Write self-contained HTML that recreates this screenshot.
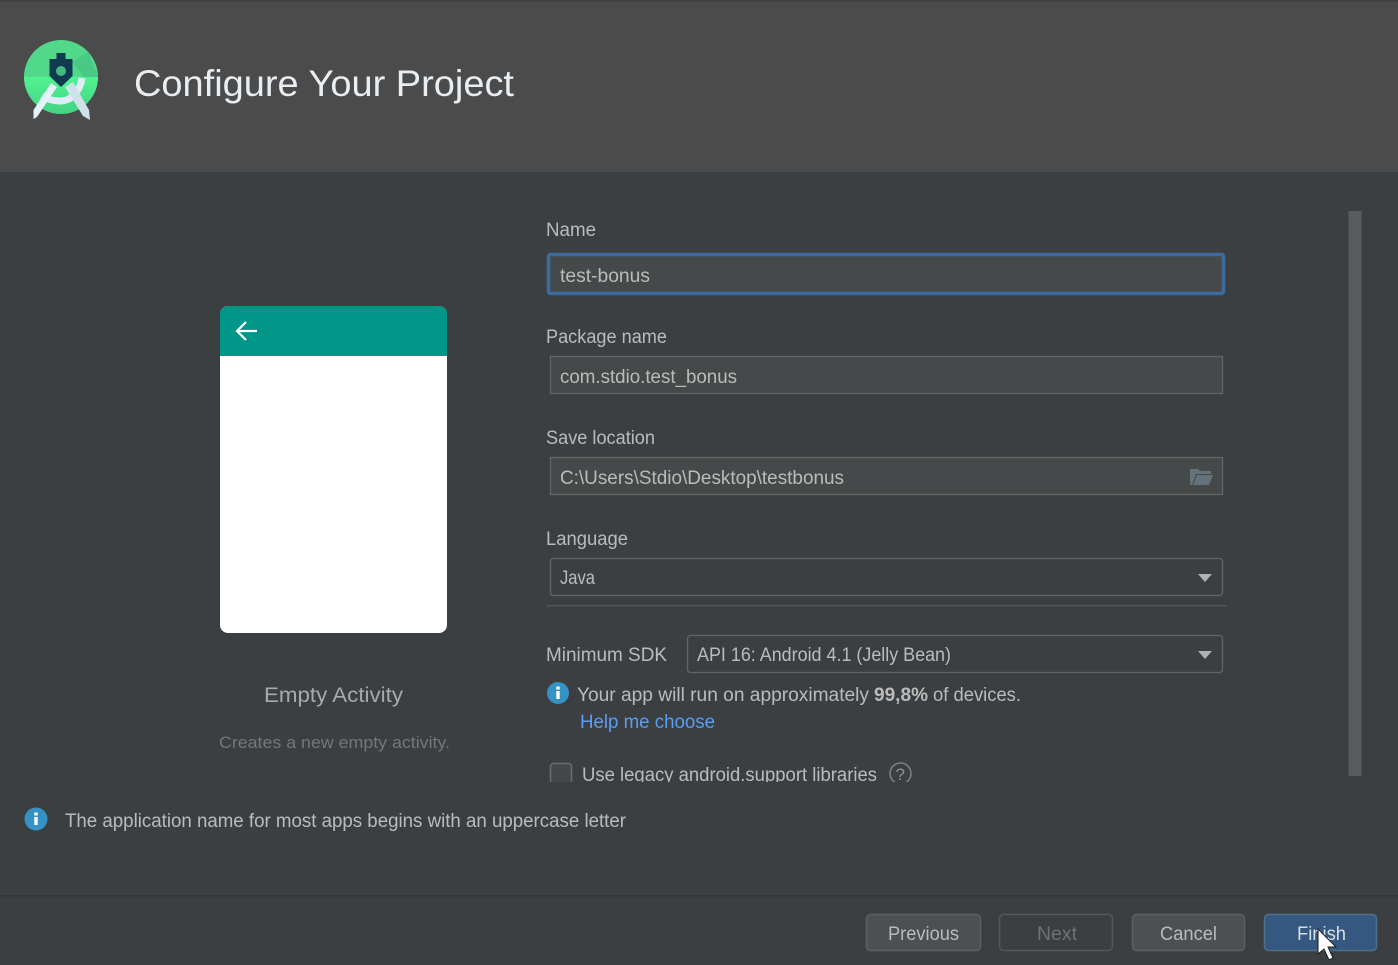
<!DOCTYPE html>
<html lang="en">
<head>
<meta charset="utf-8">
<title>Configure Your Project</title>
<style>
html,body{margin:0;padding:0;background:#3c3f41;width:1398px;height:965px;overflow:hidden}
svg{display:block;filter:blur(.35px)}
text{font-family:"Liberation Sans",sans-serif;font-size:19px;fill:#bbbbbb}
</style>
</head>
<body>
<svg width="1398" height="965" viewBox="0 0 1398 965" xmlns="http://www.w3.org/2000/svg">
<defs>
<clipPath id="c"><rect x="540" y="200" width="700" height="582"/></clipPath>
<clipPath id="l"><circle cx="61" cy="77" r="37"/></clipPath>
<linearGradient id="lg" x1="0" y1="0" x2="0" y2="1"><stop offset="0" stop-color="#50f291"/><stop offset="1" stop-color="#43d081"/></linearGradient>
</defs>
<rect width="1398" height="965" fill="#3c3f41"/>
<!-- header -->
<rect width="1398" height="172" fill="#4b4b4b"/>
<rect width="1398" height="1.5" fill="#3c3f41"/>
<!-- logo -->
<circle cx="61" cy="77" r="37" fill="#52d88a"/>
<rect x="20" y="77" width="84" height="40" fill="url(#lg)" clip-path="url(#l)"/>
<path d="M72 62 L88 52 L98 77 H84Z" fill="#49c985" clip-path="url(#l)"/>
<path d="M82 78 C80 92 71 101 60 101 C53 101 47 99 42 96" fill="none" stroke="#dfecf5" stroke-width="7"/>
<path d="M51 83 L33.5 110 V119 L37 117 L57 87Z" fill="#e6f2fa"/>
<path d="M65 87 L83 116 L90 120 L89 110 L73 82Z" fill="#cfe2ec"/>
<path d="M56.5 53 H65.5 V59 H72.5 V76 L61 87 L49.5 76 V59 H56.5Z" fill="#0f3a50"/>
<circle cx="61" cy="71" r="5" fill="#45b883"/>
<text x="134" y="96" textLength="380" lengthAdjust="spacingAndGlyphs" style="font-size:37px;fill:#e9eef3">Configure Your Project</text>
<!-- preview -->
<rect x="220" y="306" width="227" height="327" rx="8" fill="#ffffff"/>
<path d="M220 356 V314 a8 8 0 0 1 8-8 H439 a8 8 0 0 1 8 8 V356Z" fill="#009688"/>
<path d="M237 331 H257 M246 322 L237 331 L246 340" fill="none" stroke="#ffffff" stroke-width="2.2"/>
<text x="264" y="702" textLength="139" lengthAdjust="spacingAndGlyphs" style="font-size:21px;fill:#a9a9a9">Empty Activity</text>
<text x="219" y="748" textLength="231" lengthAdjust="spacingAndGlyphs" style="font-size:17px;fill:#747677">Creates a new empty activity.</text>
<!-- form -->
<text x="546" y="236" textLength="50" lengthAdjust="spacingAndGlyphs">Name</text>
<rect x="548.5" y="254.5" width="675" height="39" rx="2" fill="#45494a" stroke="#3d6b9f" stroke-width="3.5"/>
<text x="560" y="282" textLength="90" lengthAdjust="spacingAndGlyphs">test-bonus</text>
<text x="546" y="343" textLength="121" lengthAdjust="spacingAndGlyphs">Package name</text>
<rect x="550.5" y="356.5" width="672" height="37" fill="#45494a" stroke="#646464" stroke-width="1.3"/>
<text x="560" y="383" textLength="177" lengthAdjust="spacingAndGlyphs">com.stdio.test_bonus</text>
<text x="546" y="444" textLength="109" lengthAdjust="spacingAndGlyphs">Save location</text>
<rect x="550.5" y="457.5" width="672" height="37" fill="#45494a" stroke="#646464" stroke-width="1.3"/>
<text x="560" y="484" textLength="284" lengthAdjust="spacingAndGlyphs">C:\Users\Stdio\Desktop\testbonus</text>
<path d="M1190 469 H1198 L1200 471 H1211 V474 H1196 L1192 485 H1190Z M1197 475 H1213 L1209 485 H1193Z" fill="#66727a"/>
<text x="546" y="545" textLength="82" lengthAdjust="spacingAndGlyphs">Language</text>
<rect x="550.5" y="558.5" width="672" height="37" rx="3" fill="#3c3f41" stroke="#646464" stroke-width="1.3"/>
<text x="560" y="584" textLength="35" lengthAdjust="spacingAndGlyphs">Java</text>
<path d="M1198 574 H1212 L1205 582Z" fill="#afb1b3"/>
<rect x="546" y="605" width="681" height="1.5" fill="#515354"/>
<text x="546" y="661" textLength="121" lengthAdjust="spacingAndGlyphs">Minimum SDK</text>
<rect x="687.5" y="635.5" width="535" height="37" rx="3" fill="#3c3f41" stroke="#646464" stroke-width="1.3"/>
<text x="697" y="661" textLength="254" lengthAdjust="spacingAndGlyphs">API 16: Android 4.1 (Jelly Bean)</text>
<path d="M1198 651 H1212 L1205 659Z" fill="#afb1b3"/>
<circle cx="558" cy="693" r="11" fill="#3592c4"/>
<rect x="556.3" y="691" width="3.4" height="8" fill="#ffffff"/>
<rect x="556.3" y="686.5" width="3.4" height="3" fill="#ffffff"/>
<text x="577" y="701" textLength="292" lengthAdjust="spacingAndGlyphs">Your app will run on approximately</text>
<text x="874" y="701" textLength="54" lengthAdjust="spacingAndGlyphs" style="font-weight:bold">99,8%</text>
<text x="933" y="701" textLength="88" lengthAdjust="spacingAndGlyphs">of devices.</text>
<text x="580" y="728" textLength="135" lengthAdjust="spacingAndGlyphs" style="fill:#589df6">Help me choose</text>
<g clip-path="url(#c)">
<rect x="550.5" y="763.5" width="21" height="30" rx="3" fill="#43494a" stroke="#6b6b6b" stroke-width="1.5"/>
<text x="582" y="781" textLength="295" lengthAdjust="spacingAndGlyphs">Use legacy android.support libraries</text>
<circle cx="900.5" cy="773.5" r="10.5" fill="none" stroke="#7f8284" stroke-width="1.5"/>
<text x="895.5" y="780" style="font-size:17px;fill:#8f9294">?</text>
</g>
<!-- scrollbar -->
<rect x="1348.5" y="211" width="13" height="565" fill="#595b5d"/>
<!-- validation -->
<circle cx="36" cy="819" r="11.5" fill="#3592c4"/>
<rect x="34.3" y="817" width="3.4" height="8" fill="#ffffff"/>
<rect x="34.3" y="812.5" width="3.4" height="3" fill="#ffffff"/>
<text x="65" y="827" textLength="561" lengthAdjust="spacingAndGlyphs">The application name for most apps begins with an uppercase letter</text>
<!-- footer -->
<rect y="895" width="1398" height="1.5" fill="#323435"/>
<rect x="866.5" y="914.5" width="114" height="36" rx="4" fill="#4c5052" stroke="#5e6060" stroke-width="1.5"/>
<text x="888" y="940" textLength="71" lengthAdjust="spacingAndGlyphs">Previous</text>
<rect x="999.5" y="914.5" width="113" height="36" rx="4" fill="#3c3f41" stroke="#555758" stroke-width="1.5"/>
<text x="1037" y="940" textLength="40" lengthAdjust="spacingAndGlyphs" style="fill:#6f7172">Next</text>
<rect x="1132.5" y="914.5" width="112" height="36" rx="4" fill="#4c5052" stroke="#5e6060" stroke-width="1.5"/>
<text x="1160" y="940" textLength="57" lengthAdjust="spacingAndGlyphs">Cancel</text>
<rect x="1264.5" y="914.5" width="112" height="36" rx="4" fill="#365880" stroke="#4c708c" stroke-width="1.5"/>
<text x="1297" y="940" textLength="49" lengthAdjust="spacingAndGlyphs" style="fill:#d5dfe8">Finish</text>
<path d="M1318 929 V954 L1324 949 L1329 960 L1333 958 L1328 947 L1336 947Z" fill="#ffffff" stroke="#1c1c1c" stroke-width="1"/>
</svg>
</body>
</html>
